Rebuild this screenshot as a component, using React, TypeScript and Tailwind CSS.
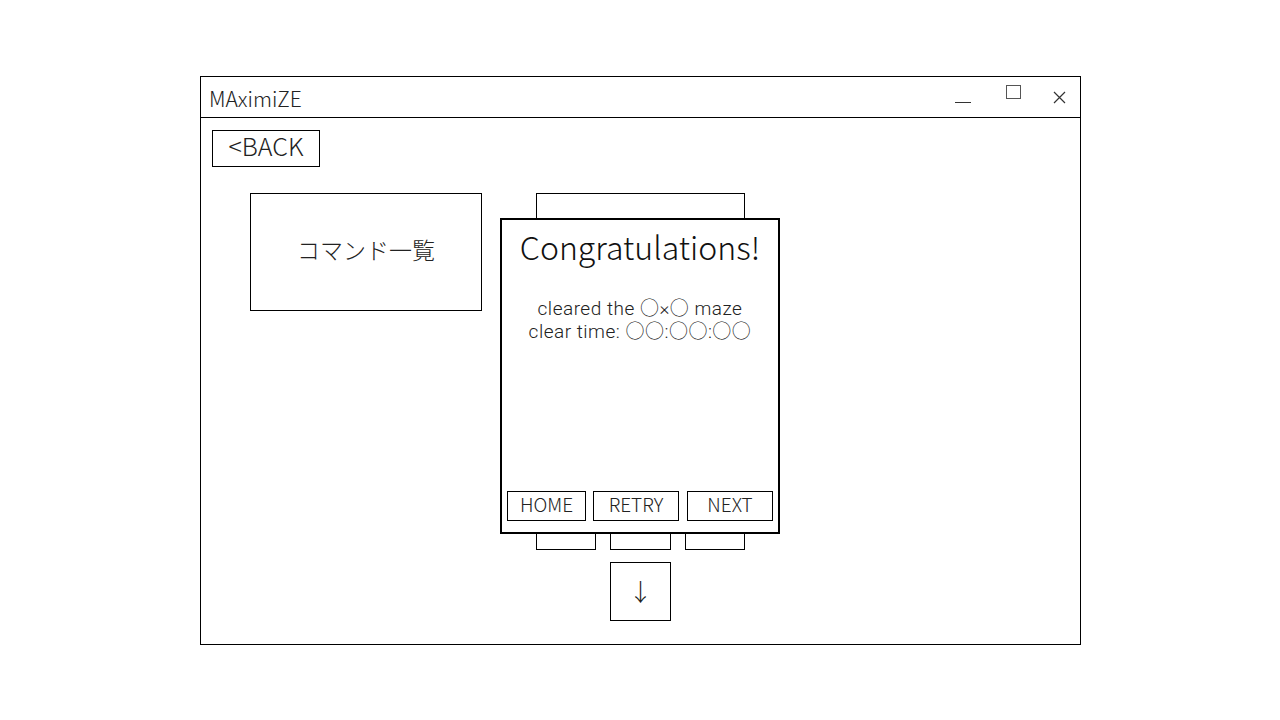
import React from "react";

const font = "font-['Noto_Sans_CJK_JP','Noto_Sans',sans-serif] font-light";

const TitleBar = () => {
  return (
    <div className="h-[41px] border-b border-black flex items-center">
      <div className="ml-[8px] mt-[3px] text-[21px] text-[#222] leading-none">MAximiZE</div>
      <div className="ml-auto flex items-center">
        <div className="w-[16px] h-px bg-[#333] mt-[10px]" />
        <div className="ml-[35px] w-[15px] h-[14px] border border-[#555] -mt-[11px]" />
        <svg className="ml-[32px] mr-[14px]" width="13" height="13" viewBox="0 0 13 13">
          <path d="M1 1 L12 12 M12 1 L1 12" stroke="#333" strokeWidth="1.2" />
        </svg>
      </div>
    </div>
  );
};

const ResultDialog = () => {
  return (
    <div className="absolute left-[-36px] top-[25px] w-[280px] h-[316px] border-2 border-black bg-white flex flex-col">
      <div className="text-center text-[32px] text-[#111] leading-none mt-[10px]">Congratulations!</div>
      <div className="text-center font-['Roboto','Noto_Sans_CJK_JP',sans-serif] font-light text-[19px] tracking-[0.5px] text-[#222] leading-[23px] mt-[35px]">
        <div>cleared the ○×○ maze</div>
        <div>clear time: ○○:○○:○○</div>
      </div>
      <div className="mt-auto mb-[11px] ml-[5px] flex gap-[7px] text-[19px] text-[#222] leading-none">
        <div className="w-[79px] h-[30px] border border-black flex items-center justify-center pb-[6px]">HOME</div>
        <div className="w-[86px] h-[30px] border border-black flex items-center justify-center pb-[6px]">RETRY</div>
        <div className="ml-[1px] w-[86px] h-[30px] border border-black flex items-center justify-center pb-[6px]">NEXT</div>
      </div>
    </div>
  );
};

export default function App() {
  return (
    <div className={`w-full h-[720px] bg-white pt-[76px] pl-[200px] ${font}`}>
      <div className="w-[881px] h-[569px] border border-black flex flex-col">
        <TitleBar />
        <div className="flex-1 flex flex-col">
          <div className="ml-[11px] mt-[12px] w-[108px] h-[37px] border border-black flex items-center justify-center pb-[6px] text-[25px] text-[#222] leading-none">
            &lt;BACK
          </div>
          <div className="mt-[26px] ml-[49px] flex items-start gap-[54px]">
            <div className="w-[232px] h-[118px] border border-black flex items-center justify-center pb-[6px] text-[23px] text-[#222] leading-none">
              コマンド一覧
            </div>
            <div className="relative w-[209px] flex flex-col">
              <div className="h-[26px] border border-black" />
              <div className="h-[314px]" />
              <div className="flex gap-[14px]">
                <div className="w-[60px] h-[17px] border border-black" />
                <div className="w-[61px] h-[17px] border border-black" />
                <div className="w-[60px] h-[17px] border border-black" />
              </div>
              <div className="ml-[74px] mt-[12px] w-[61px] h-[59px] border border-black flex items-center justify-center pb-[2px] text-[24px] text-[#222] leading-none">
                ↓
              </div>
              <ResultDialog />
            </div>
          </div>
        </div>
      </div>
    </div>
  );
}
